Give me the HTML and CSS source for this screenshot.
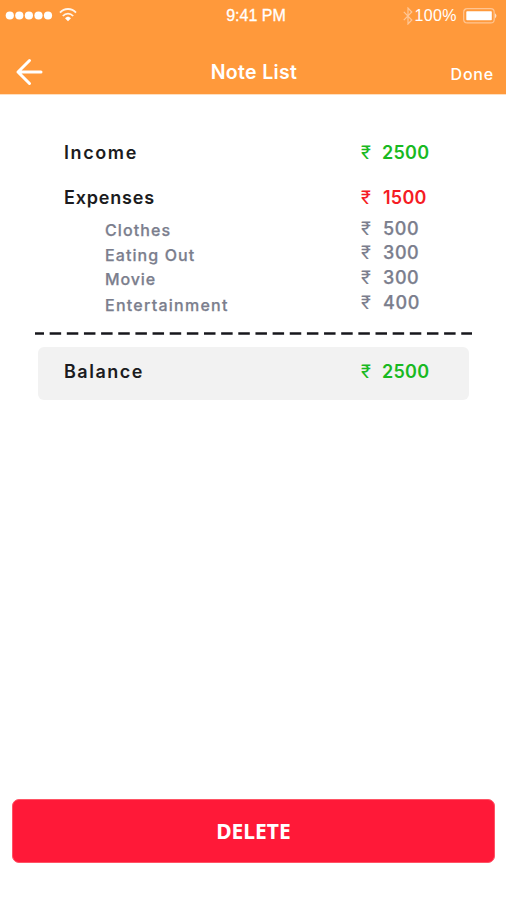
FILE: index.html
```html
<!DOCTYPE html>
<html lang="en">
<head>
<meta charset="utf-8">
<title>Note List</title>
<link rel="stylesheet" href="styles.css">
</head>
<body>
<header class="header">
  <div class="status">
    <div class="signal">
      <svg width="48" height="10" viewBox="0 0 48 10" fill="#fff"><circle cx="4.8" cy="4.500" r="4.1"/><circle cx="14.300" cy="4.500" r="4.1"/><circle cx="23.900" cy="4.500" r="4.1"/><circle cx="33.500" cy="4.500" r="4.1"/><circle cx="43" cy="4.500" r="4.1"/></svg>
      <svg class="wifi" width="18" height="14" viewBox="0 0 18 14" fill="none" stroke="#fff4ea" stroke-width="1.8"><path d="M1 4.600C5.500-.2 12.500-.2 17 4.600M3.800 8C6.800 4.700 11.200 4.700 14.200 8"/><path d="M6 10.300C7.700 8.200 10.300 8.200 12 10.300L9 13.300Z" fill="#fff" stroke="none"/></svg>
    </div>
    <span class="time">9:41 PM</span>
    <div class="power">
      <svg width="10" height="18" viewBox="0 0 10 18" fill="none" stroke="#ffc797" stroke-width="1.2"><path d="M.8 4.800 8.800 13 5 17V1L8.800 5 .8 13.200"/></svg>
      <span class="percent">100%</span>
      <svg class="battery" width="34" height="16" viewBox="0 0 34 16"><rect x=".7" y=".7" width="30.500" height="14.200" rx="3.500" fill="none" stroke="#ffc592" stroke-width="1.200"/><rect x="3.300" y="3.300" width="25.500" height="9" rx=".8" fill="#fff"/><path d="M32.300 5.200q2 2.600 0 5.200z" fill="#fff"/></svg>
    </div>
  </div>
  <nav class="nav">
    <svg class="back" width="28" height="28" viewBox="0 0 28 28" fill="none" stroke="#fff" stroke-width="3" stroke-linecap="round" stroke-linejoin="round"><path d="M14.500 2.500 3 14 14.500 25.500M3 14H26"/></svg>
    <h1 class="title">Note List</h1>
    <span class="done">Done</span>
  </nav>
</header>
<main class="content">
  <section class="summary">
    <div class="row income"><span class="label t-income">Income</span><span class="amount green"><span class="rupee">₹</span>2500</span></div>
    <div class="row expenses"><span class="label t-expenses">Expenses</span><span class="amount red"><span class="rupee">₹</span>1500</span></div>
    <div class="row sub"><span class="label t-clothes">Clothes</span><span class="amount"><span class="rupee">₹</span>500</span></div>
    <div class="row sub"><span class="label t-eating">Eating Out</span><span class="amount"><span class="rupee">₹</span>300</span></div>
    <div class="row sub"><span class="label t-movie">Movie</span><span class="amount"><span class="rupee">₹</span>300</span></div>
    <div class="row sub last"><span class="label t-fun">Entertainment</span><span class="amount"><span class="rupee">₹</span>400</span></div>
  </section>
  <svg class="divider" width="437" height="3" viewBox="0 0 437 3"><path d="M0 1.500H437" stroke="#17171c" stroke-width="2.400" stroke-dasharray="11.500 5.650" stroke-dashoffset="2.500"/></svg>
  <div class="balance row"><span class="label t-balance">Balance</span><span class="amount green"><span class="rupee">₹</span>2500</span></div>
</main>
<footer class="footer"><button class="delete">DELETE</button></footer>
</body>
</html>
```
FILE: styles.css
```css
* { box-sizing: border-box; }
body {
  margin: 0;
  height: 900px;
  display: flex;
  flex-direction: column;
  background: #fff;
  color: #1b1b20;
  font-family: Inter, "Open Sans", sans-serif;
}
.header { height: 94px; background: #ff993b; color: #fff; box-shadow: 0 1px 0 #ffdfbf; }
.status {
  height: 31px;
  padding: 0 9px 0 5px;
  display: grid;
  grid-template-columns: 1fr auto 1fr;
  align-items: center;
}
.signal, .power { display: flex; align-items: center; }
.wifi { margin: -2px 0 0 6px; }
.power { justify-content: flex-end; }
.time, .percent { font-family: "Liberation Sans", Arial, sans-serif; font-size: 16px; }
.time { padding-left: 10px; -webkit-text-stroke: .3px #fff; }
.percent { letter-spacing: .4px; margin: 0 6px 0 1px; }
.nav {
  height: 63px;
  padding: 26px 13px 0 15px;
  display: grid;
  grid-template-columns: 1fr auto 1fr;
  align-items: start;
  align-content: start;
}
.back { display: block; margin-top: .5px; }
.title { margin: 0; font-size: 19.5px; line-height: 28px; font-weight: 600; letter-spacing: .35px; padding-top: 1px; }
.done { justify-self: end; font-size: 16px; font-weight: 500; line-height: 28px; padding-top: 3px; letter-spacing: .8px; margin-right: -1px; }
.content { flex: 1; display: flex; flex-direction: column; }
.summary { padding-top: 47px; }
.row {
  display: grid;
  grid-template-columns: 297px 1fr;
  align-items: center;
  padding-left: 64px;
  font-size: 18px;
  line-height: 24px;
  font-weight: 600;
}
.income { height: 24px; }
.expenses { height: 24px; margin: 21px 0 6px; }
.sub { height: 24.5px; padding-left: 105px; grid-template-columns: 256px 1fr; color: #7b7e8d; font-weight: 500; }
.sub .label { font-size: 16px; padding-top: 2px; -webkit-text-stroke: .25px #7b7e8d; }
.sub .amount { letter-spacing: .6px; margin-top: -1px; -webkit-text-stroke: .25px #7b7e8d; }
.last { height: 26.5px; padding-top: 1px; }
.label { justify-self: start; }
.amount { display: flex; letter-spacing: .25px; }
.rupee { width: 21px; font-family: Roboto, "Noto Sans", sans-serif; font-size: 19px; font-weight: 400; letter-spacing: 0; -webkit-text-stroke: 0; }
.red .rupee, .sub .rupee { width: 22px; }
.green { color: #19b922; }
.red { color: #f51c24; }
.divider { display: block; margin: 16px 0 0 35px; }
.balance {
  width: 431px;
  height: 53px;
  margin: 12px 0 0 38px;
  padding: 0 0 4px 26px;
  border-radius: 6px;
  background: #f2f2f2;
}
.t-income { letter-spacing: 1.6px; }
.t-expenses { letter-spacing: .8px; }
.t-clothes { letter-spacing: 1.1px; }
.t-eating { letter-spacing: 1.1px; }
.t-movie { letter-spacing: .9px; }
.t-fun { letter-spacing: 1.25px; }
.t-balance { letter-spacing: 1.5px; }
.footer { padding: 0 11px 37px 12px; }
.delete {
  display: block;
  width: 100%;
  height: 64px;
  padding: 0 0 1px;
  border: 1px solid #ff5365;
  border-radius: 7px;
  background: #ff1938;
  color: #fff;
  font: 700 21px "Noto Sans", sans-serif;
}
```
